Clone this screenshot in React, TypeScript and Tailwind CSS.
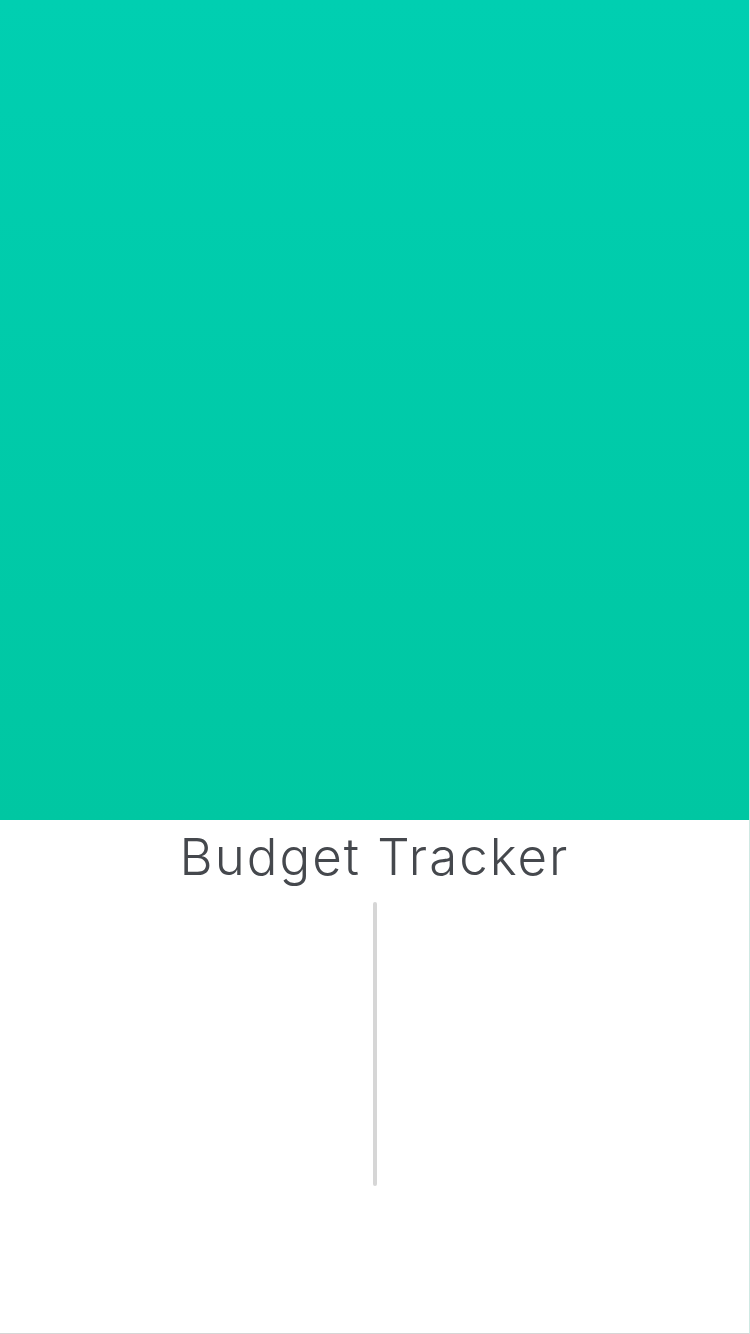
import React from "react";

function App() {
  return (
    <div className="w-[750px] h-[1334px] flex flex-col bg-white border-r border-b border-r-[#cfe9e3] border-b-[#d6d6d6] overflow-hidden">
      <div className="h-[820px] w-full bg-gradient-to-b from-[#00cfb1] to-[#00c7a2]" />
      <div className="flex flex-col items-center">
        <h1
          className="mt-[1px] text-[51px] leading-[72px] font-light tracking-[2px] text-[#45484d]"
          style={{ fontFamily: "Inter, 'Liberation Sans', sans-serif" }}
        >
          Budget Tracker
        </h1>
        <div className="mt-[9px] w-[4px] h-[284px] rounded-full bg-[#d6d6d6]" />
      </div>
    </div>
  );
}

export default App;
